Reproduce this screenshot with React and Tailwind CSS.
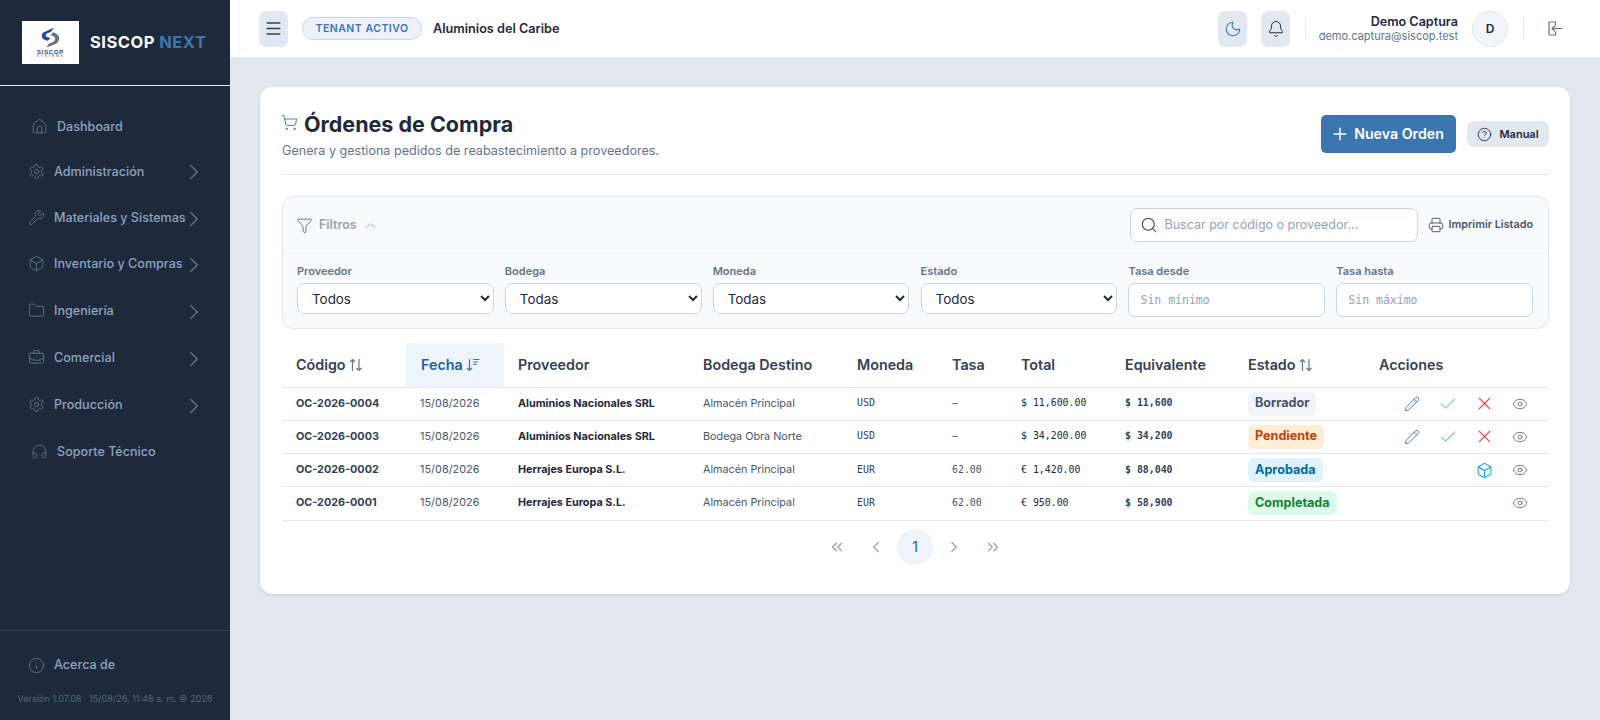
import {
  Bell, Box, BriefcaseBusiness, Check, ChevronLeft, ChevronRight, ChevronsLeft, ChevronsRight,
  ChevronUp, CircleHelp, Eye, Folder, Funnel, Headphones, House, Info, Menu, Moon, Pencil,
  Plus, Printer, Search, Settings, ShoppingCart, Wrench, X,
} from "lucide-react";

const menu = [
  { label: "Administración", icon: Settings, h: "h-[48px]" },
  { label: "Materiales y Sistemas", icon: Wrench, h: "h-[45px]" },
  { label: "Inventario y Compras", icon: Box, h: "h-[47px]" },
  { label: "Ingeniería", icon: Folder, h: "h-[47px]" },
  { label: "Comercial", icon: BriefcaseBusiness, h: "h-[47px]" },
  { label: "Producción", icon: Settings, h: "h-[47px]" },
];

const orders = [
  { code: "OC-2026-0004", prov: "Aluminios Nacionales SRL", dest: "Almacén Principal", cur: "USD", rate: "—", total: "$ 11,600.00", eq: "$ 11,600", state: "Borrador", cls: "bg-[#f1f5f9] text-[#475569]", actions: "edit" },
  { code: "OC-2026-0003", prov: "Aluminios Nacionales SRL", dest: "Bodega Obra Norte", cur: "USD", rate: "—", total: "$ 34,200.00", eq: "$ 34,200", state: "Pendiente", cls: "bg-[#ffedd5] text-[#c2410c]", actions: "edit" },
  { code: "OC-2026-0002", prov: "Herrajes Europa S.L.", dest: "Almacén Principal", cur: "EUR", rate: "62.00", total: "€ 1,420.00", eq: "$ 88,040", state: "Aprobada", cls: "bg-[#e0f2fe] text-[#0369a1]", actions: "box" },
  { code: "OC-2026-0001", prov: "Herrajes Europa S.L.", dest: "Almacén Principal", cur: "EUR", rate: "62.00", total: "€ 950.00", eq: "$ 58,900", state: "Completada", cls: "bg-[#dcfce7] text-[#15803d]", actions: "" },
];

function Logo() {
  return (
    <div className="w-[57px] h-[43px] bg-white flex flex-col items-center pt-[6px] shrink-0">
      <svg width="19" height="21" viewBox="0 0 20 21" fill="none">
        <path d="M14 0 L3 5 Q0 7 1 10 Q2 13 7 14 L10 11 Q5 10 5 8 Q5 6 10 5 Z" fill="#1d4f9c" />
        <path d="M13 5 L10 8 Q15 9 15 12 Q15 15 8 17 L6 21 L16 17 Q20 14 19 10 Q17 6 13 5 Z" fill="#6b7280" />
      </svg>
      <span className="mt-[1px] text-[6px] leading-[6px] font-bold text-[#1d3f7c] tracking-[0.7px] font-['Liberation_Sans',sans-serif]">SISCOP</span>
      <span className="text-[3.5px] leading-[3px] text-[#555] tracking-[1.6px] font-['Liberation_Sans',sans-serif]">SYSTEMS</span>
    </div>
  );
}

function Sidebar() {
  return (
    <aside className="w-[230px] shrink-0 bg-[#1e293b] flex flex-col text-[#8ea3c0] text-[12.6px] font-medium">
      <div className="h-[86px] shrink-0 border-b border-[#e2e8f0] flex items-center pl-[22px] pb-[1px] gap-[11px]">
        <Logo />
        <div className="text-[16.5px] font-bold tracking-[0.5px] whitespace-nowrap text-white">
          SISCOP <span className="text-[#3b76b0]">NEXT</span>
        </div>
      </div>
      <nav className="flex-1 pt-[21px]">
        <div className="h-[41px] flex items-center pl-[32px] gap-[11px]">
          <House size={17} strokeWidth={1.3} className="text-[#64748b] -mt-[2px] -mx-[1.5px]" />
          <span>Dashboard</span>
        </div>
        {menu.map((m) => {
          const Icon = m.icon;
          return (
            <div key={m.label} className={`${m.h} flex items-center pl-[29px] gap-[11px]`}>
              <Icon size={17} strokeWidth={1.3} className="text-[#64748b] -mt-[2px] -mx-[1.5px] shrink-0" />
              <span className="w-[116px] whitespace-nowrap">{m.label}</span>
              <ChevronRight size={26} strokeWidth={1.3} className="text-[#64748b] shrink-0" />
            </div>
          );
        })}
        <div className="h-[47px] flex items-center pl-[32px] gap-[11px]">
          <Headphones size={17} strokeWidth={1.2} className="text-[#64748b] -mt-[2px] -mx-[1.5px]" />
          <span>Soporte Técnico</span>
        </div>
      </nav>
      <div className="border-t border-[#334155] h-[90px] shrink-0">
        <div className="h-[54px] pt-[14px] flex items-center pl-[29px] gap-[11px]">
          <Info size={17} strokeWidth={1.3} className="text-[#64748b] shrink-0 -mx-[1.5px]" />
          <span>Acerca de</span>
        </div>
        <div className="text-center text-[9.05px] font-normal text-[#56677f] mt-[7px] whitespace-nowrap">
          Versión 1.07.08 · 15/08/26, 11:48 a. m. © 2026
        </div>
      </div>
    </aside>
  );
}

function Header() {
  return (
    <header className="h-[57px] shrink-0 bg-white flex items-center pl-[29px] pr-[37px]">
      <button className="w-[29px] h-[36px] rounded-[7px] bg-[#e2e8f0] flex items-center justify-center text-[#334155]">
        <Menu size={19} strokeWidth={2} />
      </button>
      <span className="ml-[14px] h-[23px] w-[120px] rounded-full border border-[#c5d5e8] bg-[#edf2f9] flex items-center justify-center text-[#3b76b0] text-[10.5px] font-semibold tracking-[0.5px]">
        TENANT ACTIVO
      </span>
      <span className="ml-[11px] text-[12.7px] font-semibold text-[#1e293b]">Aluminios del Caribe</span>
      <div className="flex-1" />
      <button className="w-[29px] h-[36px] rounded-[7px] bg-[#e2e8f0] flex items-center justify-center text-[#3b76b0]">
        <Moon size={18} strokeWidth={1.4} />
      </button>
      <button className="ml-[14px] w-[29px] h-[36px] rounded-[7px] bg-[#e2e8f0] flex items-center justify-center text-[#1e293b]">
        <Bell size={18} strokeWidth={1.3} />
      </button>
      <div className="ml-[15px] w-px h-[21px] bg-[#e2e8f0]" />
      <div className="w-[152px] text-right">
        <div className="text-[12.6px] leading-[15px] font-semibold text-[#1e293b]">Demo Captura</div>
        <div className="text-[11px] leading-[15px] text-[#64748b]">demo.captura@siscop.test</div>
      </div>
      <div className="ml-[14px] w-[36px] h-[36px] rounded-full bg-[#f1f5f9] border border-[#e2e8f0] flex items-center justify-center text-[12px] font-semibold text-[#1e293b]">D</div>
      <div className="ml-[15px] w-px h-[21px] bg-[#e2e8f0]" />
      <svg className="ml-[24px]" width="15" height="15" viewBox="0 0 15 15" fill="none" stroke="#64748b" strokeWidth="1.2">
        <path d="M7.5 4.5 V1 H2 a1 1 0 0 0 -1 1 V13 a1 1 0 0 0 1 1 H7.5 V10.5" />
        <path d="M14.5 7.5 H4 M7 4.7 L4 7.5 L7 10.3" />
      </svg>
    </header>
  );
}

function SortAlt({ className }) {
  return (
    <svg className={className} width="14" height="14" viewBox="0 0 14 14" fill="none" stroke="currentColor" strokeWidth="1.2">
      <path d="M3.5 13 V1.5 M1 4 L3.5 1.5 L6 4" />
      <path d="M10 1 V12.5 M7.5 10 L10 12.5 L12.5 10" />
    </svg>
  );
}

function SortDown() {
  return (
    <svg className="ml-[3px]" width="14" height="14" viewBox="0 0 14 14" fill="none" stroke="#3b76b0" strokeWidth="1.2">
      <path d="M3.5 1 V12.5 M1 10 L3.5 12.5 L6 10" />
      <path d="M7 1.5 H13.5 M7 4 H12 M7 6.5 H10.5" />
    </svg>
  );
}

function Filters() {
  const selects = [["Proveedor", "Todos"], ["Bodega", "Todas"], ["Moneda", "Todas"], ["Estado", "Todos"]];
  return (
    <section className="mt-[21px] bg-[#f8fafc] border border-[#e2e8f0] rounded-[12px]">
      <div className="h-[57px] border-b border-[#f1f5f9] flex items-center pl-[13px] pr-[15px]">
        <Funnel size={17} strokeWidth={1.3} className="text-[#3b76b0]" />
        <span className="ml-[6px] text-[12.5px] font-semibold text-[#94a3b8]">Filtros</span>
        <ChevronUp size={17} strokeWidth={1.3} className="ml-[5px] text-[#94a3b8]" />
        <div className="flex-1" />
        <div className="w-[288px] h-[34px] rounded-[7px] border border-[#cbd5e1] bg-white flex items-center pl-[9px] gap-[7px]">
          <Search size={18} strokeWidth={1.4} className="text-[#334155]" />
          <input placeholder="Buscar por código o proveedor..." className="flex-1 outline-none bg-transparent text-[12.5px] placeholder:text-[#94a3b8]" />
        </div>
        <Printer size={16} strokeWidth={1.4} className="ml-[10px] text-[#475569]" />
        <span className="ml-[5px] text-[10.8px] font-semibold text-[#475569] whitespace-nowrap">Imprimir Listado</span>
      </div>
      <div className="grid grid-cols-6 gap-x-[11.2px] pl-[14px] pr-[15px] pt-[10px] pb-[11px]">
        {selects.map(([label, value]) => (
          <label key={label} className="block">
            <div className="text-[11px] leading-[14px] font-semibold text-[#64748b] mb-[5px]">{label}</div>
            <select defaultValue={value} className="w-full h-[31px] rounded-[7px] border border-[#cbd5e1] bg-white pl-[10px] text-[13.4px] text-[#1e293b]">
              <option>{value}</option>
            </select>
          </label>
        ))}
        {[["Tasa desde", "Sin mínimo"], ["Tasa hasta", "Sin máximo"]].map(([label, ph]) => (
          <label key={label} className="block">
            <div className="text-[11px] leading-[14px] font-semibold text-[#64748b] mb-[5px]">{label}</div>
            <input placeholder={ph} className="w-full h-[34px] rounded-[7px] border border-[#cbd5e1] bg-white pl-[11px] text-[11.5px] outline-none placeholder:text-[#94a3b8] font-['DejaVu_Sans_Mono',monospace]" />
          </label>
        ))}
      </div>
    </section>
  );
}

function ActionSlot({ children }) {
  return <span className="w-[36px] flex items-center justify-center">{children}</span>;
}

function OrdersTable() {
  const th = "px-[14px] text-left text-[14.3px] font-semibold text-[#334155] whitespace-nowrap";
  const td = "px-[14px] whitespace-nowrap";
  const mono = "font-['DejaVu_Sans_Mono',monospace] text-[9.9px]";
  return (
    <table className="mt-[14px] w-full table-fixed">
      <colgroup>
        <col className="w-[124px]" />
        <col className="w-[98px]" />
        <col className="w-[185px]" />
        <col className="w-[154px]" />
        <col className="w-[95px]" />
        <col className="w-[69px]" />
        <col className="w-[104px]" />
        <col className="w-[123px]" />
        <col className="w-[131px]" />
        <col />
      </colgroup>
      <thead>
        <tr className="h-[44px] border-b border-[#e2e8f0]">
          <th className={th}>
            <span className="flex items-center">Código<SortAlt className="ml-[3px] text-[#64748b]" /></span>
          </th>
          <th className="px-[14px] text-left text-[14.3px] font-semibold text-[#1f6199] bg-[#edf4fb]">
            <span className="flex items-center pl-[1px]">Fecha<SortDown /></span>
          </th>
          <th className={th}>Proveedor</th>
          <th className={th}>Bodega Destino</th>
          <th className={th}>Moneda</th>
          <th className={th}>Tasa</th>
          <th className={th}>Total</th>
          <th className={th}>Equivalente</th>
          <th className={th}>
            <span className="flex items-center">Estado<SortAlt className="ml-[4px] text-[#64748b]" /></span>
          </th>
          <th className={th}>Acciones</th>
        </tr>
      </thead>
      <tbody className="text-[10.8px] text-[#475569]">
        {orders.map((o) => (
          <tr key={o.code} className="h-[33.25px] border-b border-[#e2e8f0]">
            <td className={`${td} font-bold text-[#334155]`}>{o.code}</td>
            <td className={`${td} tracking-[0.06px]`}>15/08/2026</td>
            <td className={`${td} font-bold text-[#1e293b]`}>{o.prov}</td>
            <td className={td}>{o.dest}</td>
            <td className={`${td} ${mono} text-[#334155]`}>{o.cur}</td>
            <td className={`${td} ${mono} text-[#475569]`}>{o.rate}</td>
            <td className={`${td} ${mono} text-[#1e293b]`}>{o.total}</td>
            <td className={`${td} ${mono} font-bold text-[#334155]`}>{o.eq}</td>
            <td className={td}>
              <span className={`inline-flex items-center h-[24px] px-[7px] rounded-[6px] text-[12.6px] font-bold ${o.cls}`}>{o.state}</span>
            </td>
            <td className="pr-[11px]">
              <div className="flex justify-end">
                {o.actions === "edit" && (
                  <>
                    <ActionSlot><Pencil size={16} strokeWidth={1.4} className="text-[#3b76b0]" /></ActionSlot>
                    <ActionSlot><Check size={20} strokeWidth={1.2} className="text-[#22c55e]" /></ActionSlot>
                    <ActionSlot><X size={21} strokeWidth={1.25} className="text-[#ef4444]" /></ActionSlot>
                  </>
                )}
                {o.actions === "box" && <ActionSlot><Box size={17} strokeWidth={1.5} className="text-[#0ea5e9]" /></ActionSlot>}
                <ActionSlot><Eye size={16} strokeWidth={1.4} className="text-[#64748b]" /></ActionSlot>
              </div>
            </td>
          </tr>
        ))}
      </tbody>
    </table>
  );
}

function Pagination() {
  const cls = "w-[36px] h-[36px] flex items-center justify-center text-[#94a3b8]";
  return (
    <div className="mt-[8px] mb-[7px] flex justify-center gap-[3px] pr-[1px]">
      <span className={cls}><ChevronsLeft size={18} strokeWidth={1.7} /></span>
      <span className={cls}><ChevronLeft size={18} strokeWidth={1.7} /></span>
      <span className="w-[36px] h-[36px] rounded-full bg-[#edf4fb] flex items-center justify-center text-[14px] text-[#1f6199]">1</span>
      <span className={cls}><ChevronRight size={18} strokeWidth={1.7} /></span>
      <span className={cls}><ChevronsRight size={18} strokeWidth={1.7} /></span>
    </div>
  );
}

export default function App() {
  return (
    <div className="w-[1600px] h-[720px] flex overflow-hidden bg-[#e2e8f0] font-['Inter',sans-serif]">
      <Sidebar />
      <div className="flex-1 flex flex-col">
        <Header />
        <main className="px-[30px] pt-[30px]">
          <div className="bg-white rounded-[12px] shadow-[0_1px_3px_rgba(0,0,0,0.12)] pl-[22px] pr-[21px] py-[22px]">
            <div className="flex items-center border-b border-[#e2e8f0] pb-[15px]">
              <div className="flex-1">
                <div className="flex items-center h-[30px]">
                  <ShoppingCart size={17} strokeWidth={1.3} className="text-[#3b76b0] -mt-[4px] -ml-[1px]" />
                  <h1 className="ml-[6px] text-[21.5px] font-bold text-[#1e293b]">Órdenes de Compra</h1>
                </div>
                <p className="mt-[3px] text-[12.6px] leading-[17px] text-[#64748b]">Genera y gestiona pedidos de reabastecimiento a proveedores.</p>
              </div>
              <button className="w-[135px] h-[38px] rounded-[5px] bg-[#3b76b0] text-white flex items-center justify-center gap-[4px] pr-[3px] text-[14.2px] font-semibold">
                <Plus size={20} strokeWidth={1.75} />Nueva Orden
              </button>
              <button className="ml-[11px] w-[82px] h-[26px] rounded-[7px] bg-[#e2e8f0] text-[#1e293b] flex items-center justify-center gap-[7px] text-[11px] font-semibold">
                <CircleHelp size={15} strokeWidth={1.4} />Manual
              </button>
            </div>
            <Filters />
            <OrdersTable />
            <Pagination />
          </div>
        </main>
      </div>
    </div>
  );
}
